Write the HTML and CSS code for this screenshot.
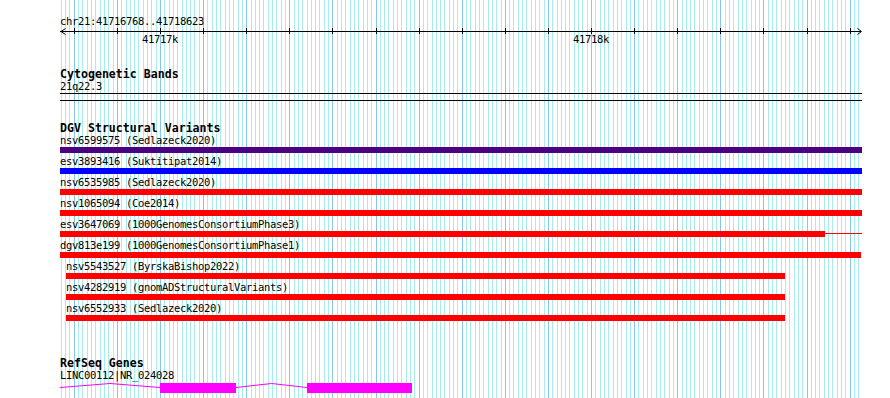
FILE: index.html
```html
<!DOCTYPE html>
<html>
  <head>
    <meta charset="utf-8">
    <title>chr21:41716768..41718623</title>
    <link rel="stylesheet" href="styles.css">
  </head>
  <body>
    <div class="panel" id="panel">
      <svg class="grid" id="grid" width="802" height="398"></svg>

      <div class="ruler">
        <div class="ruler-title">chr21:41716768..41718623</div>
        <svg class="ruler-axis" id="axis" width="802" height="6">
          <line x1="0" y1="4.5" x2="801" y2="4.5" />
          <polyline points="5.5,1.5 1,4.5 5.5,7.5" />
          <polyline points="797.5,1.5 801.5,4.5 797.5,7.5" />
        </svg>
        <div class="ruler-labels">
          <span class="tick-label" style="left:100px">41717k</span>
          <span class="tick-label" style="left:531px">41718k</span>
        </div>
      </div>

      <div class="track cyto">
        <div class="track-title">Cytogenetic Bands</div>
        <div class="label">21q22.3</div>
        <div class="band"></div>
      </div>

      <div class="track dgv">
        <div class="track-title">DGV Structural Variants</div>
        <div class="feature">
          <div class="label">nsv6599575 (Sedlazeck2020)</div>
          <div class="bar purple"></div>
        </div>
        <div class="feature">
          <div class="label">esv3893416 (Suktitipat2014)</div>
          <div class="bar blue"></div>
        </div>
        <div class="feature">
          <div class="label">nsv6535985 (Sedlazeck2020)</div>
          <div class="bar"></div>
        </div>
        <div class="feature">
          <div class="label">nsv1065094 (Coe2014)</div>
          <div class="bar"></div>
        </div>
        <div class="feature">
          <div class="label">esv3647069 (1000GenomesConsortiumPhase3)</div>
          <div class="bar-row">
            <div class="bar" style="width:765px"></div>
            <div class="tail"></div>
          </div>
        </div>
        <div class="feature">
          <div class="label">dgv813e199 (1000GenomesConsortiumPhase1)</div>
          <div class="bar" style="width:801px"></div>
        </div>
        <div class="feature" style="margin-left:6px">
          <div class="label">nsv5543527 (ByrskaBishop2022)</div>
          <div class="bar" style="width:719px"></div>
        </div>
        <div class="feature" style="margin-left:6px">
          <div class="label">nsv4282919 (gnomADStructuralVariants)</div>
          <div class="bar" style="width:719px"></div>
        </div>
        <div class="feature" style="margin-left:6px">
          <div class="label">nsv6552933 (Sedlazeck2020)</div>
          <div class="bar" style="width:719px"></div>
        </div>
      </div>

      <div class="track genes">
        <div class="track-title">RefSeq Genes</div>
        <div class="label">LINC00112|NR_024028</div>
        <svg class="gene" width="802" height="13">
          <polyline class="intron" points="0,6.5 50,2.5 100,6.5" />
          <rect class="exon" x="100" y="2" width="76" height="10" />
          <polyline class="intron" points="176,6.5 211.5,2.5 247,6.5" />
          <rect class="exon" x="247" y="2" width="105" height="10" />
        </svg>
      </div>
    </div>

    <script>
      // Grid lines and ruler ticks: 10bp minor, 100bp major
      const start = 41716768;
      const end = 41718623;
      const scale = 800 / (end - start + 1);
      const ns = 'http://www.w3.org/2000/svg';
      const grid = document.getElementById('grid');
      const axis = document.getElementById('axis');

      for (let bp = Math.ceil(start / 10) * 10; bp <= end; bp += 10) {
        const x = Math.round((bp - start) * scale) + 0.5;
        const major = bp % 100 === 0;
        const line = document.createElementNS(ns, 'line');
        line.setAttribute('x1', x);
        line.setAttribute('x2', x);
        line.setAttribute('y1', 0);
        line.setAttribute('y2', 398);
        line.setAttribute('class', major ? 'major' : 'minor');
        grid.appendChild(line);

        if (major) {
          const tick = document.createElementNS(ns, 'line');
          tick.setAttribute('x1', x);
          tick.setAttribute('x2', x);
          tick.setAttribute('y1', 1);
          tick.setAttribute('y2', 7);
          axis.appendChild(tick);
        }
      }
    </script>
  </body>
</html>
```

FILE: styles.css
```css
body { margin: 0; background: #fff; color: #000; font-family: "DejaVu Sans Mono", monospace; }

.panel {
  position: relative;
  width: 802px;
  min-height: 398px;
  margin-left: 60px;
  overflow: hidden;
}

.grid { position: absolute; top: 0; left: 0; shape-rendering: crispEdges; }
.grid .minor { stroke: #a8ecf0; stroke-width: 1; }
.grid .major { stroke: #88c4f0; stroke-width: 1; }

.ruler, .track { position: relative; }

.ruler { padding-top: 15px; }
.ruler-title, .label, .ruler-labels {
  font-size: 10.5px;
  letter-spacing: -0.32px;
  line-height: 12px;
  height: 12px;
  white-space: pre;
}
.ruler-axis { display: block; overflow: visible; }
.ruler-axis line { stroke: #000; stroke-width: 1; shape-rendering: crispEdges; }
.ruler-axis polyline { fill: none; stroke: #000; stroke-width: 1; }
.ruler-labels { position: relative; }
.tick-label { position: absolute; top: 0; transform: translateX(-50%); }

.track-title { font-size: 11.6px; font-weight: bold; line-height: 12px; height: 12px; white-space: pre; }

.cyto { margin-top: 23px; }
.band { height: 6px; margin-top: 1px; border-top: 1px solid #000; border-bottom: 1px solid #000; }

.dgv { margin-top: 21px; }
.feature { margin-bottom: 2px; }
.bar { height: 6px; margin-top: 1px; background: #ff0000; }
.bar.purple { background: #4b0082; }
.bar.blue { background: #0000ff; }
.bar-row { display: flex; }
.bar-row .bar { flex: none; }
.tail { flex: 1; height: 1px; margin-top: 3px; background: #ff0000; }

.genes { margin-top: 37px; }
.genes .track-title { line-height: 11px; height: 11px; }
.gene { display: block; }
.gene .intron { fill: none; stroke: #ff00ff; stroke-width: 1; }
.gene .exon { fill: #ff00ff; }
```
